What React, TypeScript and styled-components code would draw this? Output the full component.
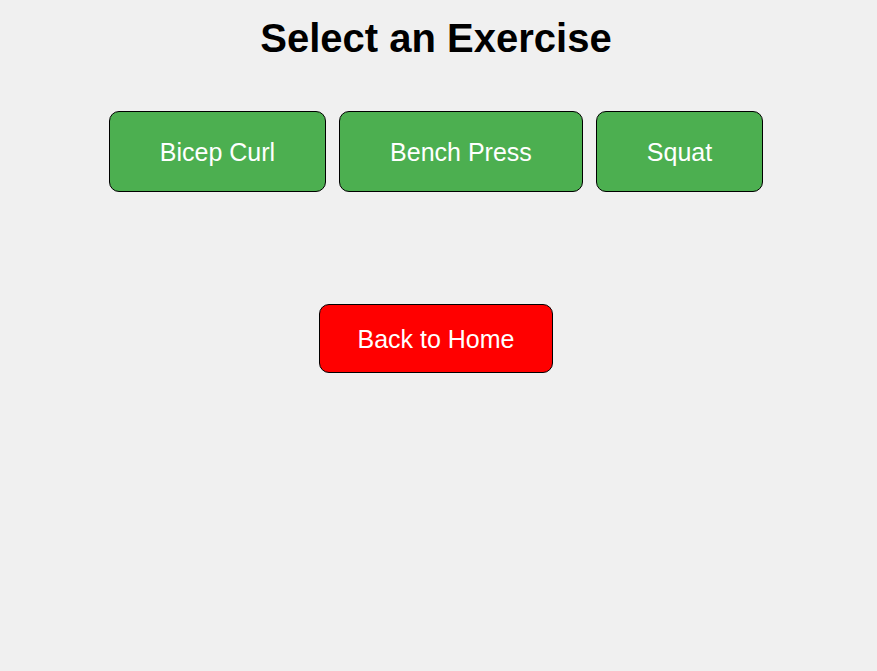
import React from "react";
import styled, { createGlobalStyle } from "styled-components";

const Global = createGlobalStyle`
  html, body { margin: 0; padding: 0; background: #f0f0f0; }
  body { font-family: "Liberation Sans", Arial, sans-serif; }
`;

const Page = styled.div`
  display: flex;
  flex-direction: column;
  align-items: center;
  padding: 15px 5px 0 0;
  min-height: 671px;
  box-sizing: border-box;
`;

const Title = styled.h1`
  margin: 0 0 50px;
  font-size: 40px;
  font-weight: bold;
  color: #000;
  line-height: 46px;
`;

const Row = styled.div`
  display: flex;
  gap: 13px;
  justify-content: center;
`;

const Button = styled.button<{ $variant?: "green" | "red" }>`
  font-family: "Liberation Sans", Arial, sans-serif;
  font-size: 25px;
  line-height: 28px;
  color: #fff;
  background: ${(p) => (p.$variant === "red" ? "#ff0000" : "#4caf50")};
  border: 1px solid #000;
  border-radius: 10px;
  padding: ${(p) => (p.$variant === "red" ? "19.5px 37px" : "25.5px 50px")};
  cursor: pointer;
`;

const BackWrap = styled.div`
  margin-top: 112px;
`;

export default function App() {
  return (
    <>
      <Global />
      <Page>
        <Title>Select an Exercise</Title>
        <Row>
          <Button>Bicep Curl</Button>
          <Button>Bench Press</Button>
          <Button>Squat</Button>
        </Row>
        <BackWrap>
          <Button $variant="red">Back to Home</Button>
        </BackWrap>
      </Page>
    </>
  );
}
